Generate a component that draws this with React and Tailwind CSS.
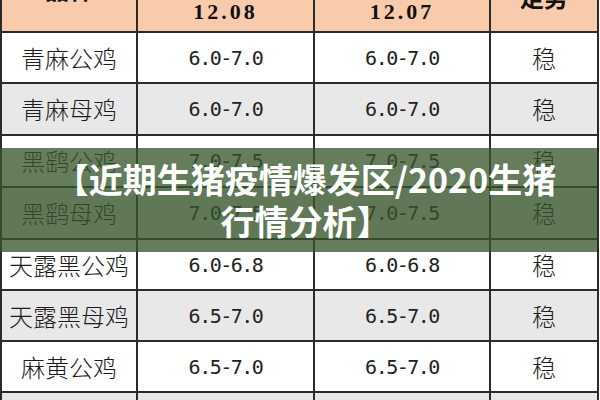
const ROWS = [
  { name: "青麻公鸡", a: "6.0-7.0", b: "6.0-7.0", h: "h-[51px]" },
  { name: "青麻母鸡", a: "6.0-7.0", b: "6.0-7.0", h: "h-[52px]" },
  { name: "黑鹞公鸡", a: "7.0-7.5", b: "7.0-7.5", h: "h-[52px]" },
  { name: "黑鹞母鸡", a: "7.0-7.5", b: "7.0-7.5", h: "h-[52px]" },
  { name: "天露黑公鸡", a: "6.0-6.8", b: "6.0-6.8", h: "h-[51px]" },
  { name: "天露黑母鸡", a: "6.5-7.0", b: "6.5-7.0", h: "h-[51px]" },
  { name: "麻黄公鸡", a: "6.5-7.0", b: "6.5-7.0", h: "h-[51px]" },
  { name: "麻黄母鸡", a: "6.5-7.0", b: "6.5-7.0", h: "h-[51px]" },
];

const CJK = "font-['Noto_Sans_CJK_SC',sans-serif]";
const NUM = "font-['DejaVu_Sans_Mono',monospace] text-[20px] tracking-[-1.5px] text-[#222]";
const CELL = "flex items-center justify-center border-l-2 border-[#2b2b2b]";

function Row({ row, gray }) {
  return (
    <div className={`grid grid-cols-[136px_177px_176px_110px] border-b-2 border-[#2b2b2b] ${row.h} ${gray ? "bg-[#e8e8e8]" : "bg-white"}`}>
      <div className={`${CELL} ${CJK} text-[24px] font-light text-[#1c1c1c] whitespace-nowrap`}>{row.name}</div>
      <div className={`${CELL} ${NUM}`}>{row.a}</div>
      <div className={`${CELL} ${NUM}`}>{row.b}</div>
      <div className={`${CELL} ${CJK} border-r-2 text-[24px] font-light text-[#1c1c1c]`}>稳</div>
    </div>
  );
}

export default function App() {
  return (
    <div className="relative w-[600px] h-[400px] overflow-hidden bg-white">
      <div className="w-[599px] -mt-[27px]">
        <div className="grid grid-cols-[136px_177px_176px_110px] h-[60px] bg-[#f8cbad] border-b-2 border-[#2b2b2b] text-[#111] font-bold leading-none">
          <div className={`flex items-end justify-center pb-[30px] border-l-2 border-[#2b2b2b] text-[24px] ${CJK}`}>品种</div>
          <div className="flex items-end justify-center pb-[8px] border-l-2 border-[#2b2b2b] font-['Liberation_Serif',serif] text-[22px] tracking-[3px]">12.08</div>
          <div className="flex items-end justify-center pb-[8px] border-l-2 border-[#2b2b2b] font-['Liberation_Serif',serif] text-[22px] tracking-[3px]">12.07</div>
          <div className={`flex items-end justify-center pb-[22px] border-l-2 border-r-2 border-[#2b2b2b] text-[24px] ${CJK}`}>走势</div>
        </div>
        {ROWS.map((r, i) => <Row key={r.name} row={r} gray={i % 2 === 1} />)}
      </div>

      <div className="absolute left-0 top-[148px] w-[597px] h-[104px] bg-[rgba(54,86,44,0.77)] flex items-center justify-center pl-[14px]">
        <p className={`text-white text-[34px] font-bold leading-[42px] text-center whitespace-nowrap ${CJK}`}>
          【近期生猪疫情爆发区/2020生猪<br />行情分析】
        </p>
      </div>
    </div>
  );
}
